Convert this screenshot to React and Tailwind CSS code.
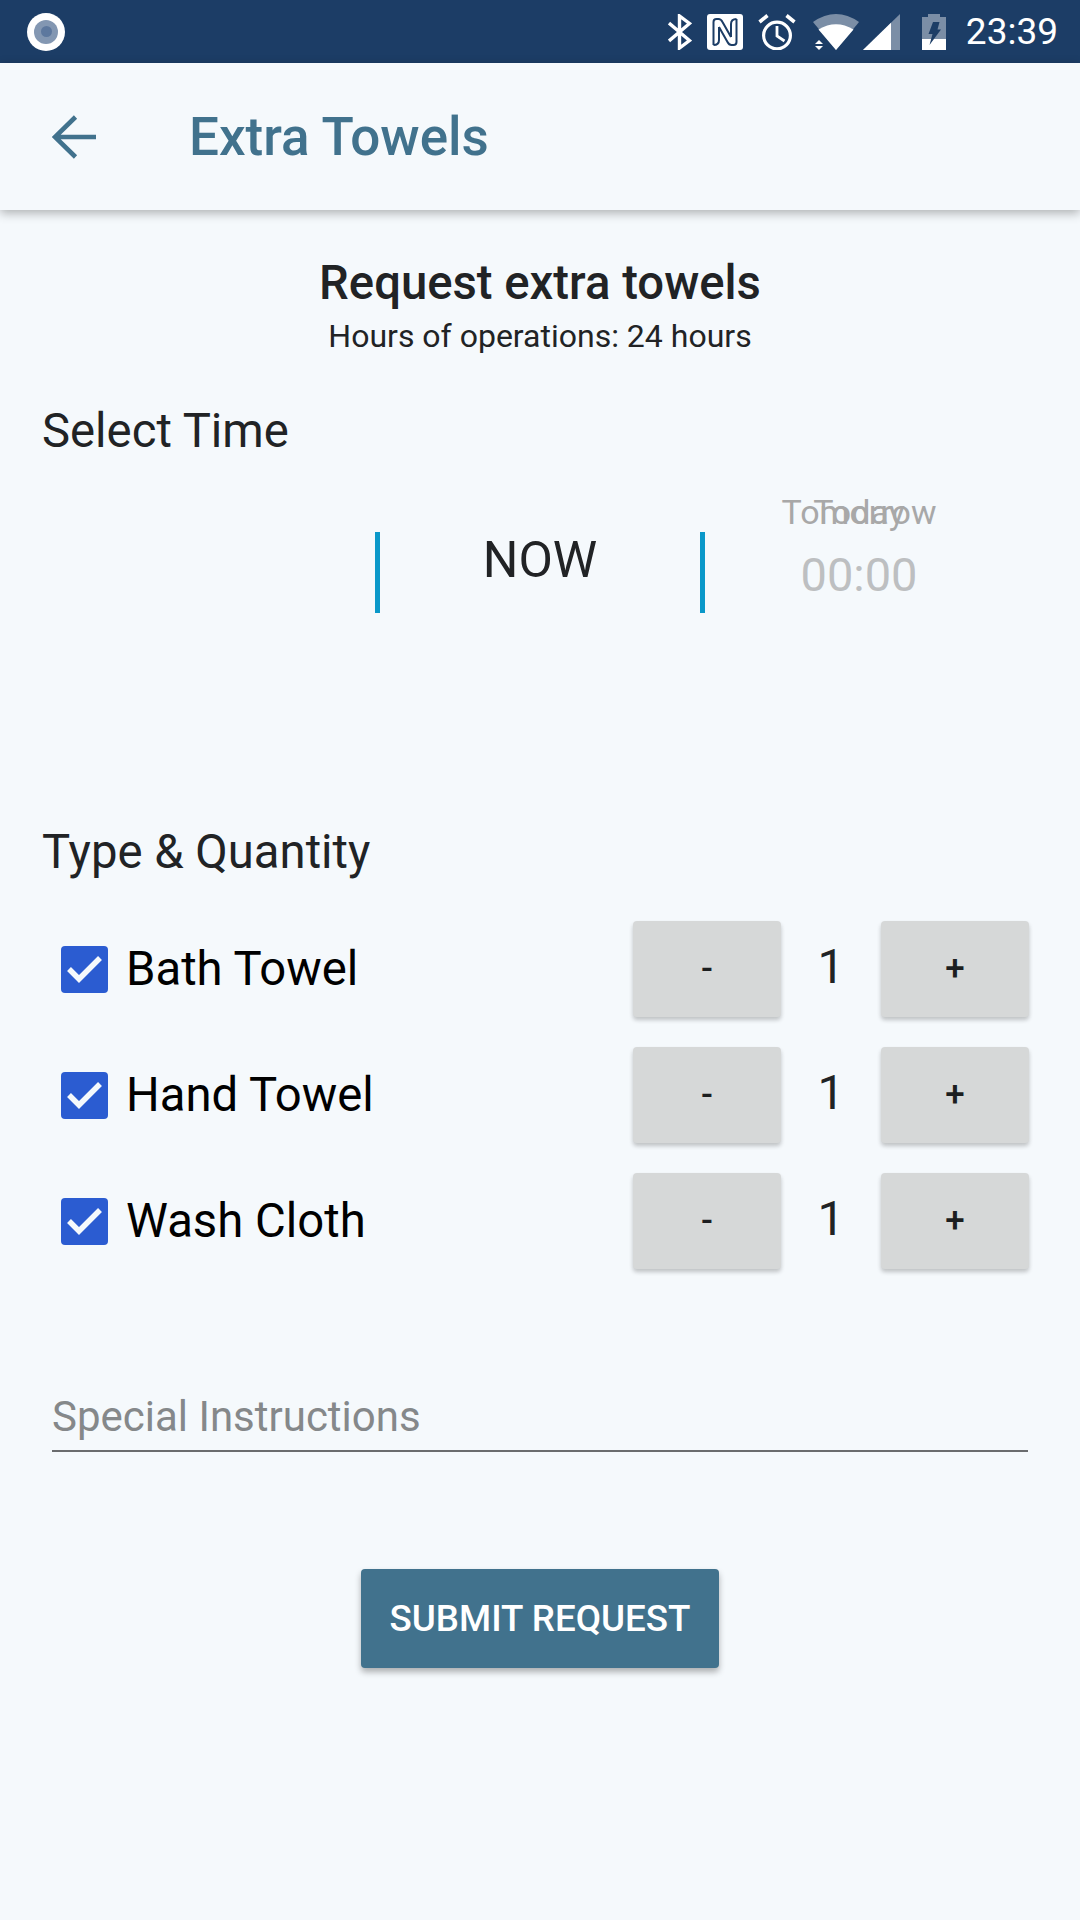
const FONT = "font-['Roboto',sans-serif]";

// Status bar glyphs
function Bluetooth() {
  return (
    <svg width="24" height="36" viewBox="0 0 24 36" fill="none" stroke="#fff" strokeWidth="3.4">
      <path d="M1 9 21.5 26.5 11.5 34V2L21.5 9.5 1 27" />
    </svg>
  );
}

function NfcMark() {
  return (
    <svg width="36" height="36" viewBox="0 0 36 36">
      <rect width="36" height="36" rx="3" fill="#fff" />
      <g fill="none" stroke="#1c3d66" strokeWidth="2">
        <path d="M6.5 31V8Q6.5 5 9.5 5h2Q14 5 15.5 8L24 23" />
        <path d="M29.5 5V28Q29.5 31 26.5 31h-2Q22 31 20.5 28L12 13" />
        <path d="M6.5 31Q12 31 12 26V13" />
        <path d="M29.5 5Q24 5 24 10V23" />
      </g>
    </svg>
  );
}

function AlarmClock() {
  return (
    <svg width="38" height="36" viewBox="0 0 38 36" fill="none" stroke="#fff">
      <circle cx="19" cy="21.5" r="13.4" strokeWidth="3.2" />
      <path d="M19 12v10l7.5 5" strokeWidth="2.8" />
      <path d="M1.5 8 9.5 1.5M36.5 8 28.5 1.5" strokeWidth="3.6" />
    </svg>
  );
}

function Wifi() {
  return (
    <svg width="46" height="36" viewBox="0 0 46 36">
      <path d="M0 8Q23-8 46 8L23 36Z" fill="#fff" fillOpacity="0.42" />
      <path d="M5.5 15.5Q23 5 40.5 15.5L23 36Z" fill="#fff" />
      <path d="M2 30 6 26 10 30ZM2 32 6 36 10 32Z" fill="#fff" />
    </svg>
  );
}

function Signal() {
  return (
    <svg width="37" height="36" viewBox="0 0 37 36">
      <path d="M37 0V36H0Z" fill="#fff" fillOpacity="0.42" />
      <path d="M28 8.8V36H0Z" fill="#fff" />
    </svg>
  );
}

function Battery() {
  return (
    <svg width="24" height="36" viewBox="0 0 24 36">
      <path d="M6 0h12v3h6v33H0V3h6Z" fill="#fff" fillOpacity="0.42" />
      <path d="M0 25h24v11H0Z" fill="#fff" />
      <path d="M11 8h6.5l-2 7.5H19L7.5 31l3-11H6.5Z" fill="#1c3d66" />
    </svg>
  );
}

function Check() {
  return (
    <span className="flex h-[47px] w-[47px] items-center justify-center rounded-[4px] bg-[#2b5cd1]">
      <svg width="37" height="29" viewBox="0 0 37 29" fill="none" stroke="#f5f9fc" strokeWidth="5.5">
        <path d="M3 14 13 24 34 3" />
      </svg>
    </span>
  );
}

function StepButton({ children }) {
  return (
    <button className="flex h-[96px] w-[148px] items-center justify-center rounded-[4px] bg-[#d6d8d8] text-[35px] font-medium text-[#1c1e20] shadow-[0_3px_4px_rgba(0,0,0,0.22)]">
      {children}
    </button>
  );
}

function TowelRow({ name }) {
  return (
    <div className="flex h-[96px] items-center pl-[61px] pr-[51px]">
      <Check />
      <span className="ml-[18px] flex-1 text-[47.25px] text-black">{name}</span>
      <StepButton>-</StepButton>
      <span className="w-[100px] pb-[4px] text-center text-[48px] text-[#212325]">1</span>
      <StepButton>+</StepButton>
    </div>
  );
}

export default function App() {
  return (
    <div className={`${FONT} flex h-[1920px] w-[1080px] flex-col overflow-hidden bg-[#f5f9fc]`}>
      <div className="flex h-[63px] shrink-0 items-center bg-[#1c3d66] pl-[27px] pr-[22px]">
        <span className="flex h-[38px] w-[38px] items-center justify-center rounded-full bg-white">
          <span className="flex h-[24px] w-[24px] items-center justify-center rounded-full bg-[#8397b2]">
            <span className="h-[11px] w-[11px] rounded-full bg-[#5d789e]" />
          </span>
        </span>
        <div className="ml-auto flex items-center">
          <Bluetooth />
          <span className="ml-[15px]"><NfcMark /></span>
          <span className="ml-[15px]"><AlarmClock /></span>
          <span className="ml-[17px]"><Wifi /></span>
          <span className="ml-[4px]"><Signal /></span>
          <span className="ml-[22px]"><Battery /></span>
          <span className="ml-[20px] text-[37px] leading-none text-white">23:39</span>
        </div>
      </div>

      <div className="z-10 flex h-[147px] shrink-0 items-center bg-[#f5f9fc] pl-[52px] shadow-[0_3px_10px_rgba(0,0,0,0.3)]">
        <svg width="44" height="44" viewBox="0 0 44 44" fill="none" stroke="#41728d" strokeWidth="4.6">
          <path d="M44 22H3M23.5 2 3 22l20.5 20" />
        </svg>
        <h1 className="ml-[93px] mt-[3px] text-[53px] font-medium text-[#41728d]">Extra Towels</h1>
      </div>

      <div className="mt-[46px] text-center text-[47.25px] leading-[54px] font-medium text-[#212325]">Request extra towels</div>
      <div className="mt-[6px] text-center text-[32px] leading-[40px] text-[#212325]">Hours of operations: 24 hours</div>

      <div className="mt-[48px] pl-[42px] text-[47.25px] leading-[54px] text-[#212325]">Select Time</div>

      <div className="mt-[74px] flex h-[81px] items-stretch pl-[375px]">
        <span className="w-[5px] bg-[#0a98c9]" />
        <span className="flex w-[320px] items-center justify-center pb-[24px] text-[50px] text-[#212325]">NOW</span>
        <span className="w-[5px] bg-[#0a98c9]" />
        <div className="-mt-[40px] ml-[77px] flex w-[154px] flex-col items-center">
          <div className="grid text-[34px] leading-[40px] whitespace-nowrap text-[#a8a8a8]">
            <span className="col-start-1 row-start-1 text-center">Tomorrow</span>
            <span className="col-start-1 row-start-1 text-center">Today</span>
          </div>
          <span className="mt-[15px] text-[47px] leading-[56px] text-[#bdbfc1]">00:00</span>
        </div>
      </div>

      <div className="mt-[212px] pl-[42px] text-[47.25px] leading-[54px] text-[#212325]">Type &amp; Quantity</div>

      <div className="mt-[42px] flex flex-col gap-[30px]">
        <TowelRow name="Bath Towel" />
        <TowelRow name="Hand Towel" />
        <TowelRow name="Wash Cloth" />
      </div>

      <div className="mx-[52px] mt-[123px] border-b-2 border-[#6a6c6e] pb-[8px] text-[42px] leading-[50px] text-[#85888a]">Special Instructions</div>

      <button className="mx-auto mt-[117px] flex h-[99px] w-[358px] items-center justify-center rounded-[4px] bg-[#41728d] text-[36.75px] font-medium text-white shadow-[0_4px_6px_rgba(0,0,0,0.3)]">
        SUBMIT REQUEST
      </button>
    </div>
  );
}
